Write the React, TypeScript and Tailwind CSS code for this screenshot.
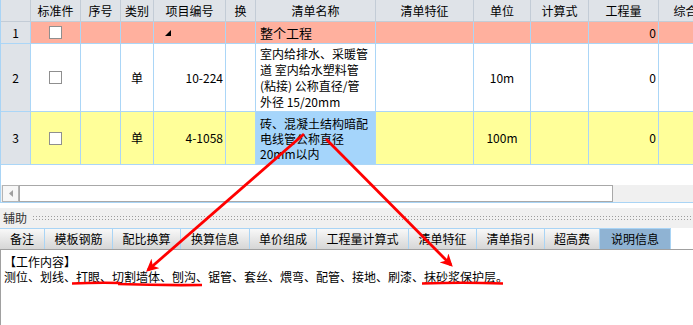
import React from 'react';

type Align = 'left' | 'center' | 'right';

interface Col {
  label: string;
  width: string;
  align: Align;
}

const cols: Col[] = [
  { label: '', width: 'w-[30px]', align: 'center' },
  { label: '标准件', width: 'w-[50px]', align: 'center' },
  { label: '序号', width: 'w-[40px]', align: 'center' },
  { label: '类别', width: 'w-[33px]', align: 'center' },
  { label: '项目编号', width: 'w-[72px]', align: 'right' },
  { label: '换', width: 'w-[30px]', align: 'center' },
  { label: '清单名称', width: 'w-[120px]', align: 'left' },
  { label: '清单特征', width: 'w-[98px]', align: 'left' },
  { label: '单位', width: 'w-[57px]', align: 'center' },
  { label: '计算式', width: 'w-[58px]', align: 'center' },
  { label: '工程量', width: 'w-[70px]', align: 'right' },
  { label: '综合单价', width: 'w-[78px]', align: 'center' },
];

const alignClass: Record<Align, string> = {
  left: 'justify-start pl-[4px]',
  center: 'justify-center',
  right: 'justify-end pr-[2px]',
};

const tabs = [
  { label: '备注', width: 'w-[45px]' },
  { label: '模板钢筋', width: 'w-[68px]' },
  { label: '配比换算', width: 'w-[68px]' },
  { label: '换算信息', width: 'w-[69px]' },
  { label: '单价组成', width: 'w-[67px]' },
  { label: '工程量计算式', width: 'w-[92px]' },
  { label: '清单特征', width: 'w-[68px]' },
  { label: '清单指引', width: 'w-[68px]' },
  { label: '超高费', width: 'w-[55px]' },
  { label: '说明信息', width: 'w-[71px]', active: true },
];

function Checkbox() {
  return <span className="block w-[13px] h-[13px] bg-white border border-[#8f8f8f]" />;
}

interface RowProps {
  height: string;
  bg: string;
  cells: React.ReactNode[];
  selected?: number;
}

function Row({ height, bg, cells, selected }: RowProps) {
  return (
    <div className={`flex ${height}`}>
      {cols.map((col, i) => (
        <div
          key={i}
          className={`${col.width} shrink-0 flex items-center border-r border-b border-[#abd6f7] ${
            i === 0 ? 'bg-[#dfe3e8] justify-center' : alignClass[col.align]
          } ${i === selected ? 'bg-[#a5d5fb]' : i === 0 ? '' : bg}`}
        >
          {cells[i]}
        </div>
      ))}
    </div>
  );
}

export default function App() {
  return (
    <div className="relative w-[693px] h-[325px] overflow-hidden bg-white text-[12px] text-black font-['Noto_Sans_CJK_SC',sans-serif]">
      {/* grid */}
      <div className="border-l border-b border-[#a9d4f5]">
        <div className="flex h-[22px] bg-[#dfe3e8]">
          {cols.map((col, i) => (
            <div
              key={i}
              className={`${col.width} shrink-0 flex items-center justify-center border-r border-b border-[#c3ccd6] whitespace-nowrap`}
            >
              {col.label}
            </div>
          ))}
        </div>

        <Row
          height="h-[22px]"
          bg="bg-[#ffb09e]"
          cells={[
            '1',
            <Checkbox />,
            '',
            '',
            <div className="w-full pl-[11px]">
              <svg width="6" height="6" viewBox="0 0 6 6">
                <polygon points="6,0 6,6 0,6" fill="#000" />
              </svg>
            </div>,
            '',
            <span className="text-[13px]">整个工程</span>,
            '',
            '',
            '',
            '0',
            '',
          ]}
        />

        <Row
          height="h-[68px]"
          bg="bg-white"
          cells={[
            '2',
            <Checkbox />,
            '',
            '单',
            '10-224',
            '',
            <div className="leading-[16px] whitespace-nowrap">
              <div>室内给排水、采暖管</div>
              <div>道 室内给水塑料管</div>
              <div>(粘接) 公称直径/管</div>
              <div>外径 15/20mm</div>
            </div>,
            '',
            '10m',
            '',
            '0',
            '',
          ]}
        />

        <Row
          height="h-[53px]"
          bg="bg-[#ffff99]"
          selected={6}
          cells={[
            '3',
            <Checkbox />,
            '',
            '单',
            '4-1058',
            '',
            <div className="leading-[15px] whitespace-nowrap">
              <div>砖、混凝土结构暗配</div>
              <div>电线管公称直径</div>
              <div>20mm以内</div>
            </div>,
            '',
            '100m',
            '',
            '0',
            '',
          ]}
        />

        <div className="h-[20px]" />

        {/* horizontal scrollbar */}
        <div className="flex h-[17px] bg-[#f0f0f0] pl-[1px]">
          <div className="w-[17px] shrink-0 flex items-center justify-center bg-[#f7f7f7] border border-[#b4b4b4]">
            <svg width="4" height="7" viewBox="0 0 4 7">
              <polygon points="4,0 4,7 0,3.5" fill="#a0a0a0" />
            </svg>
          </div>
          <div className="w-[594px] shrink-0 bg-white border border-[#a8a8a8]" />
        </div>
      </div>

      <div className="h-[5px]" />

      {/* 辅助 bar */}
      <div className="flex items-center h-[20px] bg-[#f0f0f0] pl-[3px]">
        <span className="text-[12px] text-[#333]">辅助</span>
        <div className="ml-[5px] flex-1 h-[6px] bg-[radial-gradient(circle,#9c9c9c_0.7px,transparent_1px)] bg-[length:3px_3px]" />
      </div>

      {/* tabs */}
      <div className="flex h-[22px] border-b border-[#a0a0a0]">
        {tabs.map((t) => (
          <div
            key={t.label}
            className={`${t.width} shrink-0 flex items-center justify-center border-t border-r border-[#a9d4f5] whitespace-nowrap ${
              t.active ? 'bg-[#8fb3d3]' : 'bg-linear-to-b from-[#f8f8f8] to-[#d6d6d6]'
            }`}
          >
            {t.label}
          </div>
        ))}
      </div>

      {/* content */}
      <div className="h-[80px] border-l border-[#a0a0a0] pl-[3px] pt-[4px] leading-[15px]">
        <div>【工作内容】</div>
        <div>测位、划线、打眼、切割墙体、刨沟、锯管、套丝、煨弯、配管、接地、刷漆、抹砂浆保护层。</div>
      </div>

      {/* red annotations */}
      <svg className="absolute inset-0 pointer-events-none" width="693" height="325" viewBox="0 0 693 325">
        <defs>
          <marker id="ah" viewBox="0 0 10 10" refX="8" refY="5" markerWidth="4.5" markerHeight="4.5" orient="auto">
            <path d="M0,0 L10,5 L0,10 L3,5 z" fill="#ff0000" />
          </marker>
        </defs>
        <line x1="304" y1="134" x2="148" y2="270" stroke="#ff0000" strokeWidth="2.8" markerEnd="url(#ah)" />
        <line x1="326" y1="139" x2="451" y2="265" stroke="#ff0000" strokeWidth="2.8" markerEnd="url(#ah)" />
        <path d="M72,283.5 Q96,282.5 120,283" stroke="#ff0000" strokeWidth="2.5" fill="none" />
        <path d="M118,284 Q160,285.5 202,285" stroke="#ff0000" strokeWidth="2.5" fill="none" />
        <path d="M422,283.5 Q462,282 503,283.5" stroke="#ff0000" strokeWidth="2.5" fill="none" />
      </svg>
    </div>
  );
}
